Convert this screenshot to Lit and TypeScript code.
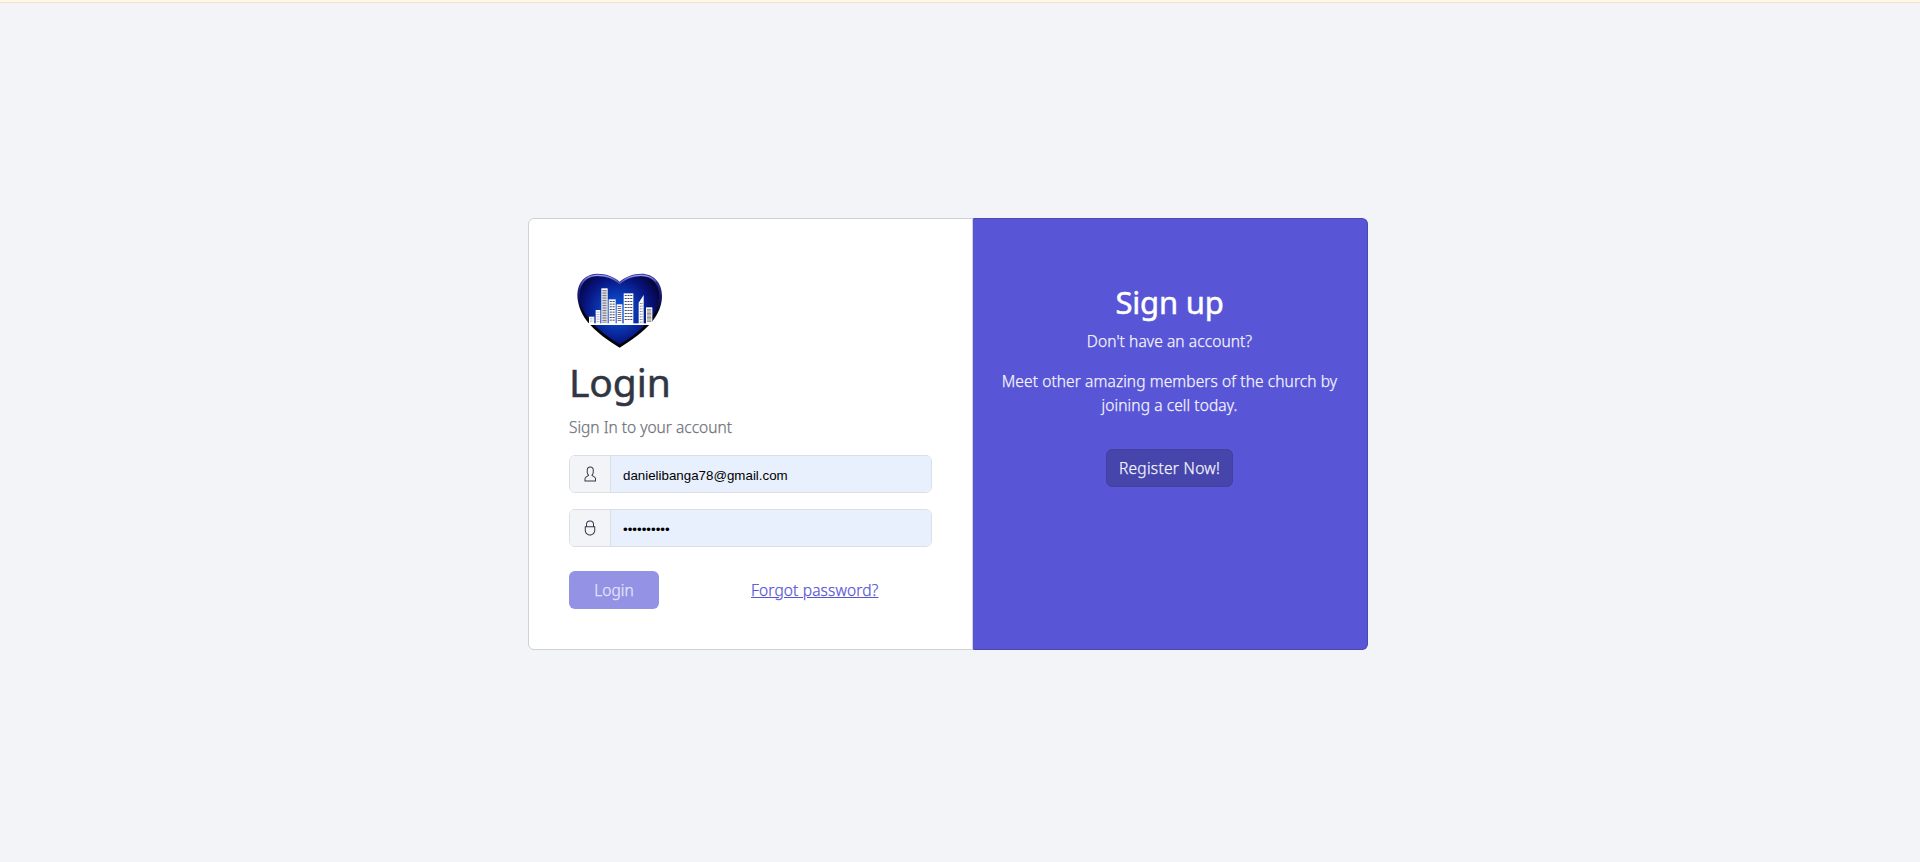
import { LitElement, html, css, svg } from "lit";
import { customElement } from "lit/decorators.js";

const userIcon =
  "M411.6,343.656l-72.823-47.334,27.455-50.334A80.23,80.23,0,0,0,376,207.681V128a112,112,0,0,0-224,0v79.681a80.236,80.236,0,0,0,9.768,38.308l27.455,50.333L116.4,343.656A79.725,79.725,0,0,0,80,410.732V496H448V410.732A79.727,79.727,0,0,0,411.6,343.656ZM416,464H112V410.732a47.836,47.836,0,0,1,21.841-40.246l97.66-63.479-41.64-76.341A48.146,48.146,0,0,1,184,207.681V128a80,80,0,0,1,160,0v79.681a48.146,48.146,0,0,1-5.861,22.985L296.5,307.007l97.662,63.479h0A47.836,47.836,0,0,1,416,410.732Z";
const lockIcon =
  "M384,200V144a128,128,0,0,0-256,0v56H88V328c0,92.635,75.365,168,168,168s168-75.365,168-168V200ZM160,144a96,96,0,0,1,192,0v56H160ZM392,328c0,74.99-61.01,136-136,136S120,402.99,120,328V232H392Z";

// x, top, width, window columns, window row pitch, window colour
const buildings: [number, number, number, number, number, string][] = [
  [87, 164, 16, 3, 7, "#8a90a8"],
  [107, 144, 14, 2, 7, "#8a90a8"],
  [124, 79, 19, 1, 5, "#77777c"],
  [146, 112, 21, 2, 8, "#3c4266"],
  [170, 127, 17, 1, 6, "#66666e"],
  [191, 94, 29, 3, 9, "#3c4266"],
  [258, 136, 19, 1, 4, "#909094"],
];

@customElement("city-heart")
export class CityHeart extends LitElement {
  static styles = css`
    :host { display: block; width: 100px; height: 97px; }
    .logo { display: block; width: 100px; height: 97px; }
  `;

  private tower([x, y, w, cols, pitch, color]: [number, number, number, number, number, string]) {
    const step = (w - 4) / cols;
    const marks = [];
    for (let r = y + 5; r < 180; r += pitch) {
      for (let c = 0; c < cols; c++) {
        marks.push(svg`<rect x=${x + 3 + c * step} y=${r} width=${step - 2} height="2.8" fill=${color}/>`);
      }
    }
    return svg`<rect x=${x} y=${y} width=${w} height=${188 - y} fill="#fbfbfd"/>${marks}`;
  }

  render() {
    return html`<svg class="logo" viewBox="27 0 300 291" aria-hidden="true">
      <defs>
        <radialGradient id="g" gradientUnits="userSpaceOnUse" cx="172" cy="145" r="135">
          <stop offset="0" stop-color="#0f5ae0"/>
          <stop offset=".4" stop-color="#0a36b0"/>
          <stop offset=".75" stop-color="#08127c"/>
          <stop offset="1" stop-color="#05063c"/>
        </radialGradient>
        <linearGradient id="e" x1="0" y1="0" x2="0" y2="1">
          <stop offset="0" stop-color="#3a3cae"/>
          <stop offset=".3" stop-color="#15166c"/>
          <stop offset=".55" stop-color="#03030f"/>
          <stop offset="1" stop-color="#020208"/>
        </linearGradient>
        <linearGradient id="s" x1="0" y1="0" x2="0" y2="1">
          <stop offset="0" stop-color="#c4caff" stop-opacity=".7"/>
          <stop offset="1" stop-color="#8088e8" stop-opacity="0"/>
        </linearGradient>
      </defs>
      <path fill="url(#e)" d="M179 257C150 239 105 209 80 176C61 150 52 123 52 98C53 58 78 35 112 35C140 35 163 45 179 59C195 45 218 35 244 35C281 35 306 62 306 101C306 129 296 153 277 178C252 210 208 239 179 257Z"/>
      <path fill="url(#g)" d="M179 247C150 230 112 203 88 172C68 146 59 122 59 99C60 64 82 43 112 43C140 43 162 53 179 68C196 53 217 43 243 43C277 43 298 68 298 101C298 126 288 149 270 172C246 203 208 231 179 247Z"/>
      <path fill="none" stroke="url(#s)" stroke-width="3.5" d="M59 83C64 54 86 40 113 40C140 40 163 49 179 64C195 49 218 40 244 40C263 40 278 47 288 59"/>
      ${buildings.map((b) => this.tower(b))}
      <path fill="#fbfbfd" d="M236 188V122L251 99V188Z"/>
      <path stroke="#4a5072" stroke-width="2.5" stroke-dasharray="3 5" d="M241 123V183M246 123V183"/>
      <rect x="85" y="184" width="192" height="5" fill="#fff"/>
    </svg>`;
  }
}

@customElement("app-root")
export class AppRoot extends LitElement {
  static styles = css`
    :host {
      display: block;
      height: 862px;
      background: #f3f4f7;
      font-family: "Noto Sans", "Open Sans", sans-serif;
      font-size: 15.5px;
      line-height: 24px;
      font-weight: 300;
      -webkit-text-stroke-width: 0.25px;
      color: #303644;
    }
    * { box-sizing: border-box; }
    h1, h2, p { margin: 0; }
    .strip { height: 3px; background: #fff8e8; border-bottom: 1px solid #f0e2c8; }
    .page { display: flex; justify-content: center; padding: 215px 24px 0 0; }
    .group { display: flex; width: 840px; height: 432px; }
    .card { border: 1px solid #d0d1d4; }
    .login {
      width: 445px;
      padding: 40px;
      background: #fff;
      border-radius: 6px 0 0 6px;
    }
    .signup {
      flex: 1;
      padding: 64px 18px 0 16px;
      background: #5856d6;
      border-color: #4a49b3;
      border-left-color: #5856d6;
      border-radius: 0 6px 6px 0;
      color: #f5f5fd;
      text-align: center;
    }
    .brand { margin: 3px 0 0; }
    h1, h2 { font-weight: 400; -webkit-text-stroke-width: 0.5px; }
    h1 { font-size: 39px; line-height: 46px; margin-bottom: 10px; letter-spacing: -0.1px; }
    h2 { font-size: 31px; line-height: 38px; margin-bottom: 8px; color: #fff; letter-spacing: -0.2px; }
    .hint { color: #6e727a; margin-bottom: 16px; }
    .field { display: flex; height: 38px; margin-bottom: 16px; border: 1px solid #dbdfe6; border-radius: 6px; overflow: hidden; }
    .addon { display: flex; align-items: center; width: 41px; padding: 0 12px; background: #f3f4f7; border-right: 1px solid #dbdfe6; }
    .icon { width: 16px; height: 16px; fill: #323a49; }
    .input {
      flex: 1;
      min-width: 0;
      border: 0;
      padding: 2px 12px 0;
      background: #e8f0fe;
      color: #000;
      font: 13.333px "Liberation Sans", Arial, sans-serif;
      -webkit-text-stroke-width: 0;
      outline: none;
    }
    .actions { display: flex; align-items: center; margin-top: 24px; }
    .btn { height: 38px; border: 0; border-radius: 6px; font: inherit; padding: 0; color: #f5f5fd; }
    .primary { width: 90px; background: #9392e5; color: #e8e8fa; }
    .forgot { margin-left: 92px; color: #5856d6; text-decoration: underline; white-space: nowrap; letter-spacing: 0.15px; }
    .lead { margin-bottom: 16px; white-space: nowrap; letter-spacing: 0.1px; }
    .register { width: 127px; margin-top: 16px; background: #4645ab; border: 1px solid #4241a0; letter-spacing: 0.3px; }
  `;

  render() {
    return html`
      <div class="strip"></div>
      <main class="page">
        <div class="group">
          <section class="card login">
            <city-heart class="brand"></city-heart>
            <h1>Login</h1>
            <p class="hint">Sign In to your account</p>
            <div class="field">
              <span class="addon"><svg class="icon" viewBox="0 0 512 512"><path d=${userIcon} /></svg></span>
              <input class="input" type="text" .value=${"danielibanga78@gmail.com"} />
            </div>
            <div class="field">
              <span class="addon"><svg class="icon" viewBox="0 0 512 512"><path d=${lockIcon} /></svg></span>
              <input class="input" type="password" .value=${"abcdefghij"} />
            </div>
            <div class="actions">
              <button class="btn primary">Login</button>
              <a class="forgot">Forgot password?</a>
            </div>
          </section>
          <section class="card signup">
            <h2>Sign up</h2>
            <p class="lead">Don't have an account?</p>
            <p class="lead">Meet other amazing members of the church by<br />joining a cell today.</p>
            <button class="btn register">Register Now!</button>
          </section>
        </div>
      </main>
    `;
  }
}
